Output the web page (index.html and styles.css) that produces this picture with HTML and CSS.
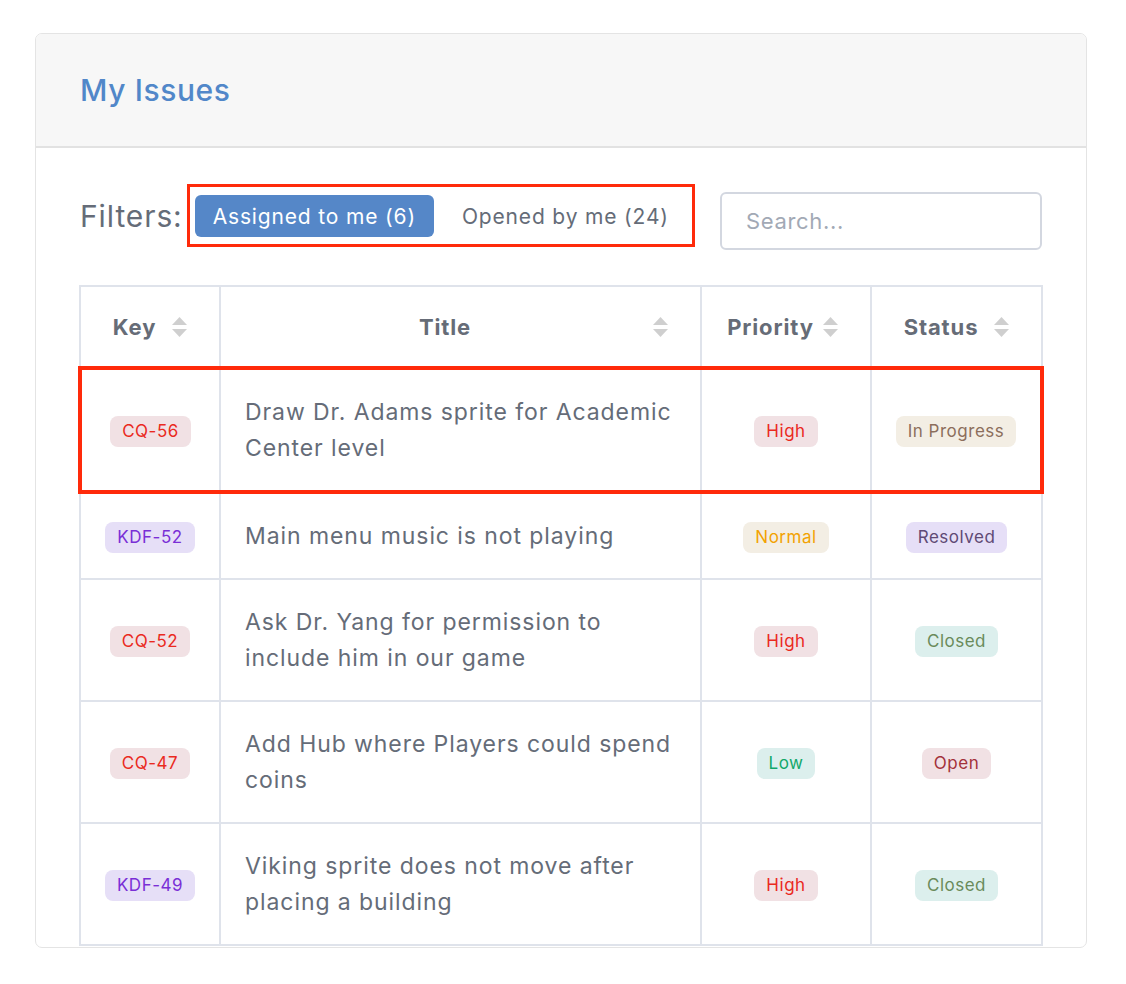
FILE: index.html
```html
<!DOCTYPE html>
<html>
<head>
<meta charset="utf-8">
<link rel="stylesheet" href="styles.css">
</head>
<body>
<div class="card">
  <div class="card-header">
    <h1 class="card-title">My Issues</h1>
  </div>
  <div class="card-body">
    <div class="toolbar">
      <div class="filters">
        <span class="filters-label">Filters:</span>
        <div class="filter-group">
          <button class="filter-btn active">Assigned to me (6)</button>
          <button class="filter-btn">Opened by me (24)</button>
        </div>
      </div>
      <input class="search" type="text" placeholder="Search...">
    </div>
    <table class="issues">
      <colgroup>
        <col class="c-key"><col class="c-title"><col class="c-pri"><col class="c-status">
      </colgroup>
      <thead>
        <tr>
          <th><div class="th-in"><span class="th-text">Key</span><svg class="sort" width="15" height="20" viewBox="0 0 15 20"><path d="M7.5 0 L15 8 L0 8 Z" /><path d="M0 12 L15 12 L7.5 20 Z" /></svg></div></th>
          <th><div class="th-in"><span class="th-text">Title</span><svg class="sort" width="15" height="20" viewBox="0 0 15 20"><path d="M7.5 0 L15 8 L0 8 Z" /><path d="M0 12 L15 12 L7.5 20 Z" /></svg></div></th>
          <th><div class="th-in"><span class="th-text">Priority</span><svg class="sort" width="15" height="20" viewBox="0 0 15 20"><path d="M7.5 0 L15 8 L0 8 Z" /><path d="M0 12 L15 12 L7.5 20 Z" /></svg></div></th>
          <th><div class="th-in"><span class="th-text">Status</span><svg class="sort" width="15" height="20" viewBox="0 0 15 20"><path d="M7.5 0 L15 8 L0 8 Z" /><path d="M0 12 L15 12 L7.5 20 Z" /></svg></div></th>
        </tr>
      </thead>
      <tbody>
        <tr class="highlight">
          <td class="center"><span class="badge b-red">CQ-56</span></td>
          <td class="title">Draw Dr. Adams sprite for Academic Center level</td>
          <td class="center"><span class="badge b-red">High</span></td>
          <td class="center"><span class="badge b-progress">In Progress</span></td>
        </tr>
        <tr>
          <td class="center"><span class="badge b-purple">KDF-52</span></td>
          <td class="title">Main menu music is not playing</td>
          <td class="center"><span class="badge b-normal">Normal</span></td>
          <td class="center"><span class="badge b-resolved">Resolved</span></td>
        </tr>
        <tr>
          <td class="center"><span class="badge b-red">CQ-52</span></td>
          <td class="title">Ask Dr. Yang for permission to include him in our game</td>
          <td class="center"><span class="badge b-red">High</span></td>
          <td class="center"><span class="badge b-closed">Closed</span></td>
        </tr>
        <tr>
          <td class="center"><span class="badge b-red">CQ-47</span></td>
          <td class="title">Add Hub where Players could spend coins</td>
          <td class="center"><span class="badge b-low">Low</span></td>
          <td class="center"><span class="badge b-open">Open</span></td>
        </tr>
        <tr>
          <td class="center"><span class="badge b-purple">KDF-49</span></td>
          <td class="title">Viking sprite does not move after placing a building</td>
          <td class="center"><span class="badge b-red">High</span></td>
          <td class="center"><span class="badge b-closed">Closed</span></td>
        </tr>
      </tbody>
    </table>
  </div>
</div>
</body>
</html>
```

FILE: styles.css
```css
* { box-sizing: border-box; }
html, body { margin: 0; padding: 0; background: #ffffff; }
body {
  padding: 33px 39px 0 35px;
  font-family: "Inter", "Open Sans", "Liberation Sans", sans-serif;
  letter-spacing: 0.03em;
  color: #656c78;
}
.card {
  width: 1052px;
  height: 915px;
  border: 1px solid #e4e4e4;
  border-radius: 7px;
  overflow: hidden;
  background: #fff;
}
.card-header {
  height: 114px;
  background: #f7f7f7;
  border-bottom: 2px solid #e2e2e2;
  padding: 0 44px;
  display: flex;
  align-items: center;
}
.card-title {
  margin: 0;
  font-size: 30px;
  font-weight: 500;
  color: #5187c9;
  letter-spacing: 0.02em;
}
.card-body {
  padding: 36px 44px 0 44px;
}
.toolbar {
  display: flex;
  align-items: flex-start;
  justify-content: space-between;
  height: 66px;
}
.filters {
  display: flex;
  align-items: center;
  gap: 4px;
}
.filters-label {
  font-size: 30px;
  color: #656c78;
  letter-spacing: 0.03em;
}
.filter-group {
  display: flex;
  gap: 10px;
  border: 3px solid #ff2a0a;
  padding: 8px 5px 7px 5px;
}
.filter-btn {
  font-family: inherit;
  letter-spacing: 0.04em;
  font-size: 21px;
  height: 42px;
  padding: 0 18px;
  border: none;
  border-radius: 6px;
  background: transparent;
  color: #656c78;
}
.filter-btn.active {
  background: #5587c8;
  color: #ffffff;
}
.search {
  margin-top: 8px;
  width: 322px;
  height: 58px;
  border: 2px solid #d3d7e0;
  border-radius: 6px;
  padding: 0 24px;
  font-family: inherit;
  letter-spacing: 0.03em;
  font-size: 22px;
  color: #656c78;
  outline: none;
}
.search::placeholder { color: #a2a9b5; }
.issues {
  margin-top: 35px;
  margin-left: -2px;
  width: 962px;
  border-collapse: collapse;
  table-layout: fixed;
}
.c-key { width: 140px; }
.c-title { width: 481px; }
.c-pri { width: 170px; }
.c-status { width: 171px; }
.issues th, .issues td {
  border: 2px solid #dfe3eb;
}
.issues th {
  padding: 0 32px 0 24px;
  height: 82px;
  font-size: 22px;
  font-weight: 700;
  letter-spacing: 0.04em;
  color: #666c77;
}
.th-in {
  display: flex;
  align-items: center;
  gap: 8px;
}
.th-text { flex: 1; text-align: center; }
.sort { fill: #cfcfcf; flex: none; }
.issues td {
  padding: 24px 24px;
  font-size: 23px;
  line-height: 36px;
  letter-spacing: 0.04em;
  vertical-align: middle;
}
.issues td.center { text-align: center; padding: 24px 6px; }
.issues td.title { color: #656c78; }
.highlight td {
  border-top: 4px solid #ff2a0a;
  border-bottom: 4px solid #ff2a0a;
}
.highlight td:first-child { border-left: 4px solid #ff2a0a; }
.highlight td:last-child { border-right: 4px solid #ff2a0a; }
.badge {
  display: inline-block;
  font-size: 17px;
  line-height: 31px;
  letter-spacing: 0.03em;
  padding: 0 12px;
  border-radius: 8px;
  vertical-align: middle;
}
.b-red { background: #f1e1e4; color: #ea2a1e; }
.b-purple { background: #e6dff7; color: #7a2fd6; }
.b-progress { background: #f3eee4; color: #8c6e5c; }
.b-normal { background: #f3eee4; color: #f2a202; }
.b-resolved { background: #e6dff7; color: #5f4a75; }
.b-closed { background: #dcefed; color: #6a8b5b; }
.b-low { background: #dcefed; color: #12a86a; }
.b-open { background: #f1e1e4; color: #a3313a; }
```
